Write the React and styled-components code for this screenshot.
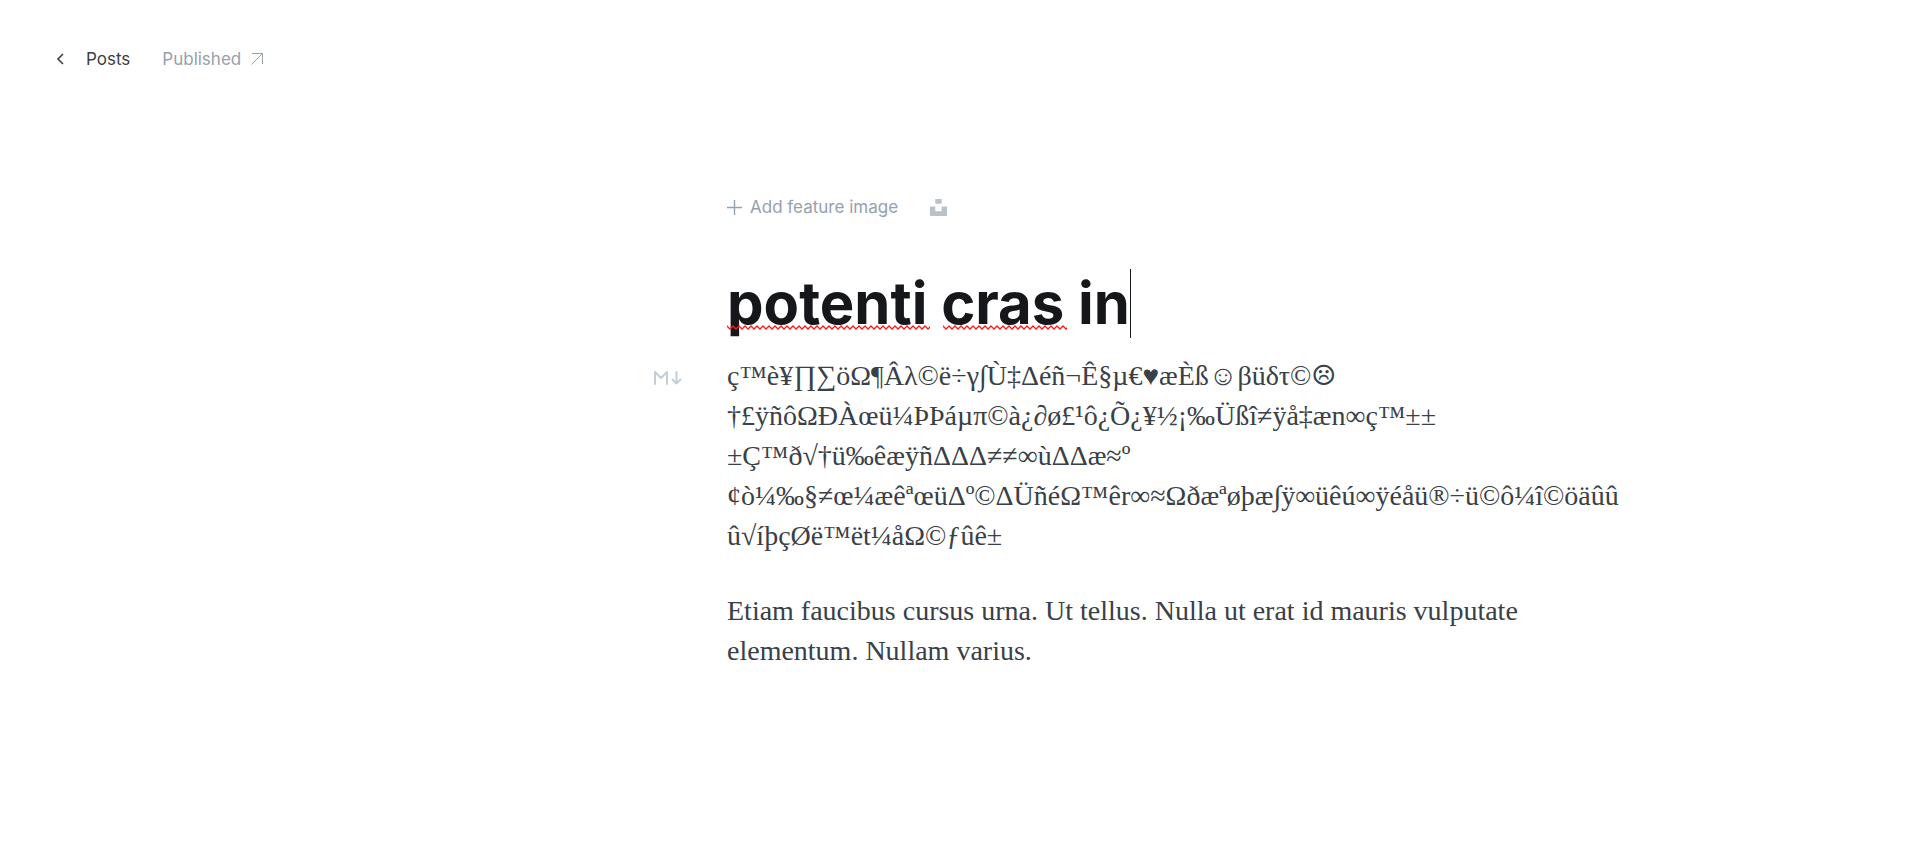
import React, { useId, useState } from "react";
import styled, { createGlobalStyle } from "styled-components";

const GlobalStyle = createGlobalStyle`
  *, *::before, *::after { box-sizing: border-box; }
  body {
    margin: 0;
    background: #fff;
    color: #394047;
    font-family: Inter, "Liberation Sans", sans-serif;
    font-size: 17px;
  }
`;

const Page = styled.div`
  min-height: 100vh;
`;

const Header = styled.header`
  display: flex;
  align-items: center;
  gap: 32px;
  padding: 47px 56px 0;
  line-height: 24px;
`;

const BackLink = styled.a`
  display: flex;
  align-items: center;
  gap: 22px;
  color: #394047;
  text-decoration: none;
`;

const StatusLink = styled.a`
  display: flex;
  align-items: center;
  gap: 10px;
  color: #95a1ad;
  text-decoration: none;
`;

const Main = styled.main`
  padding: 124px 0 64px 334px;
`;

const Column = styled.div`
  width: 100%;
  max-width: 800px;
  margin: 0 auto;
`;

const FeatureBar = styled.div`
  display: flex;
  align-items: center;
  gap: 32px;
  height: 24px;
`;

const PlainButton = styled.button`
  display: flex;
  align-items: center;
  gap: 8px;
  padding: 0;
  border: 0;
  background: none;
  color: #95a1ad;
  font: inherit;
  line-height: 24px;
  cursor: pointer;
`;

const TitleField = styled.div`
  position: relative;
  margin-top: 50px;
`;

const TitleInput = styled.input`
  display: block;
  width: 100%;
  height: 69px;
  padding: 0;
  border: 0;
  outline: 0;
  background: none;
  color: #15171a;
  font: 700 58px/69px Inter, "Liberation Sans", sans-serif;
`;

const Caret = styled.span`
  position: absolute;
  top: 0;
  left: 403px;
  width: 1px;
  height: 69px;
  background: #15171a;
`;

const Squiggle = styled.svg`
  position: absolute;
  top: 56px;
  left: ${(p) => p.$left}px;
  width: ${(p) => p.$width}px;
  height: 6px;
`;

const Content = styled.div`
  margin-top: 18px;
  font-family: "Liberation Serif", "DejaVu Serif", serif;
  font-size: 28px;
  line-height: 40px;
`;

const MarkdownCard = styled.section`
  position: relative;
`;

const CardBadge = styled.svg`
  position: absolute;
  top: 15px;
  right: calc(100% + 45px);
`;

const Paragraph = styled.p`
  margin: 0 0 35px;
`;

const Line = styled.span`
  display: block;
  white-space: nowrap;
`;

const LINES = [
  "ç™è¥∏∑öΩ¶Âλ©ë÷γ∫Ù‡Δéñ¬Ê§µ€♥æÈß☺βüδτ©☹",
  "†£ÿñôΩÐÀœü¼ÞÞáµπ©à¿∂ø£¹ô¿Õ¿¥½¡‰Üßî≠ÿå‡æn∞ç™±±",
  "±Ç™ð√†ü‰êæÿñΔΔΔ≠≠∞ùΔΔæ≈º",
  "¢ò¼‰§≠œ¼æêªœüΔº©ΔÜñéΩ™êr∞≈Ωðæªøþæ∫ÿ∞üêú∞ÿéåü®÷ü©ô¼î©öäûû",
  "û√íþçØë™ët¼åΩ©ƒûê±",
];

function SpellingMark({ left, width }) {
  const id = useId();
  return (
    <Squiggle $left={left} $width={width} aria-hidden="true">
      <defs>
        <pattern id={id} width="6" height="6" patternUnits="userSpaceOnUse">
          <path d="M-1 0 L0 1 L3 4 L6 1 L7 0" fill="none" stroke="#ff1a1a" strokeWidth="1.3" />
        </pattern>
      </defs>
      <rect width="100%" height="6" fill={`url(#${id})`} />
    </Squiggle>
  );
}

export default function App() {
  const [title, setTitle] = useState("potenti cras in");
  return (
    <Page>
      <GlobalStyle />
      <Header>
        <BackLink href="#posts">
          <svg width="8" height="12" viewBox="0 0 8 12" fill="none" stroke="currentColor" strokeWidth="1.6" aria-hidden="true">
            <path d="M7 1 2 6l5 5" />
          </svg>
          Posts
        </BackLink>
        <StatusLink href="#published">
          Published
          <svg width="12" height="12" viewBox="0 0 12 12" fill="none" stroke="currentColor" aria-hidden="true">
            <path d="M1 .5h10.500v10.500M11.500.5.500 11.500" />
          </svg>
        </StatusLink>
      </Header>
      <Main>
        <Column>
          <FeatureBar>
            <PlainButton type="button">
              <svg width="15" height="15" viewBox="0 0 15 15" fill="none" stroke="currentColor" strokeWidth="1.400" aria-hidden="true">
                <path d="M7.500 0v15M0 7.500h15" />
              </svg>
              Add feature image
            </PlainButton>
            <PlainButton type="button" aria-label="Unsplash">
              <svg width="17" height="17" viewBox="0 0 17 17" fill="#b9c2c8" aria-hidden="true">
                <path d="M5.300 0h6.400v4.800H5.300zM0 7.500h5.300v4.800h6.400V7.500H17V17H0z" />
              </svg>
            </PlainButton>
          </FeatureBar>
          <TitleField>
            <TitleInput aria-label="Post title" spellCheck={false} value={title} onChange={(e) => setTitle(e.target.value)} />
            <SpellingMark left={0} width={203} />
            <SpellingMark left={216} width={124} />
            <Caret />
          </TitleField>
          <Content>
            <MarkdownCard>
              <CardBadge width="28" height="14" viewBox="0 0 28 14" fill="none" stroke="#c5cdd5" strokeWidth="2" strokeLinecap="round" strokeLinejoin="round" aria-hidden="true">
                <path d="M1 13V1l6 6 6-6v12M22.500 1v11.500M18.500 8.500l4 4 4-4" />
              </CardBadge>
              <Paragraph>
                {LINES.map((line) => (
                  <Line key={line}>{line}</Line>
                ))}
              </Paragraph>
            </MarkdownCard>
            <Paragraph>
              Etiam faucibus cursus urna. Ut tellus. Nulla ut erat id mauris vulputate elementum. Nullam varius.
            </Paragraph>
          </Content>
        </Column>
      </Main>
    </Page>
  );
}
